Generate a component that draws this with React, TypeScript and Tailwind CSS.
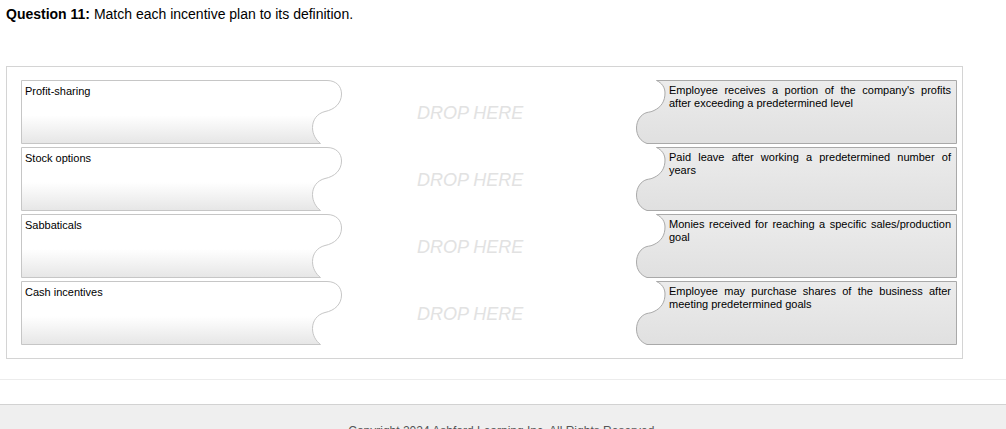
import React from "react";

const rows = [
  {
    term: "Profit-sharing",
    def: "Employee receives a portion of the company's profits after exceeding a predetermined level",
  },
  {
    term: "Stock options",
    def: "Paid leave after working a predetermined number of years",
  },
  {
    term: "Sabbaticals",
    def: "Monies received for reaching a specific sales/production goal",
  },
  {
    term: "Cash incentives",
    def: "Employee may purchase shares of the business after meeting predetermined goals",
  },
];

function TermCard({ text, id }: { text: string; id: number }) {
  return (
    <div className="relative h-[64px] w-[321px]">
      <svg className="absolute inset-0" width="321" height="64" aria-hidden>
        <defs>
          <linearGradient id={`tg${id}`} x1="0" y1="0" x2="0" y2="1">
            <stop offset="0" stopColor="#ffffff" />
            <stop offset="0.55" stopColor="#ffffff" />
            <stop offset="1" stopColor="#e6e6e6" />
          </linearGradient>
        </defs>
        <path
          d="M0.5,0.5 H306 C315,0.5 320.5,6 320.5,14 C320.5,23 314,29.5 304,31.5 C296,33.5 291.5,40 291.5,47.5 C291.5,54.5 295,60 299.5,63.5 H0.5 Z"
          fill={`url(#tg${id})`}
          stroke="#c6c6c6"
        />
      </svg>
      <div className="relative pl-[4px] pt-[5px] text-[11px] leading-[13px] text-black">{text}</div>
    </div>
  );
}

function DefCard({ text, id }: { text: string; id: number }) {
  return (
    <div className="relative h-[64px] w-[321px]">
      <svg className="absolute inset-0" width="321" height="64" aria-hidden>
        <defs>
          <linearGradient id={`dg${id}`} x1="0" y1="0" x2="0" y2="1">
            <stop offset="0" stopColor="#ececec" />
            <stop offset="1" stopColor="#e0e0e0" />
          </linearGradient>
        </defs>
        <path
          d="M20.5,0.5 C26,3 29,7.5 29,13 C29,21 25.5,27 18,30.5 C15,32 13,32 11,32.5 C5,34 0.5,40.5 0.5,48 C0.5,56 5,61.5 11,63.5 H320.5 V0.5 Z"
          fill={`url(#dg${id})`}
          stroke="#a9a9a9"
        />
      </svg>
      <div className="relative pl-[33px] pr-[6px] pt-[4px] text-justify text-[11px] leading-[13px] text-black">
        {text}
      </div>
    </div>
  );
}

export default function App() {
  return (
    <div className="min-h-[429px] bg-white font-['Liberation_Sans',Arial,sans-serif]">
      <div className="px-[6px] pt-[6px] text-[14px] leading-[16px] text-black">
        <span className="font-bold">Question 11:</span> Match each incentive plan to its definition.
      </div>

      <div className="ml-[6px] mt-[44px] w-[957px] border border-[#d4d4d4] pb-[13px] pl-[14px] pr-[5px] pt-[13px]">
        <div className="flex flex-col gap-[3px]">
          {rows.map((r, i) => (
            <div key={r.term} className="grid grid-cols-[321px_294px_321px] items-center">
              <TermCard text={r.term} id={i} />
              <div className="pl-[75px] pt-[2px] text-[18px] italic leading-[20px] text-[#e2e2e2]">DROP HERE</div>
              <DefCard text={r.def} id={i} />
            </div>
          ))}
        </div>
      </div>

      <div className="mt-[20px] h-px bg-[#ececec]" />

      <div className="mt-[24px] h-[40px] border-t border-[#d2d2d2] bg-[#efefef] pt-[19px] text-center text-[12px] leading-[14px] text-[#555]">
        Copyright 2024 Ashford Learning Inc. All Rights Reserved.
      </div>
    </div>
  );
}
